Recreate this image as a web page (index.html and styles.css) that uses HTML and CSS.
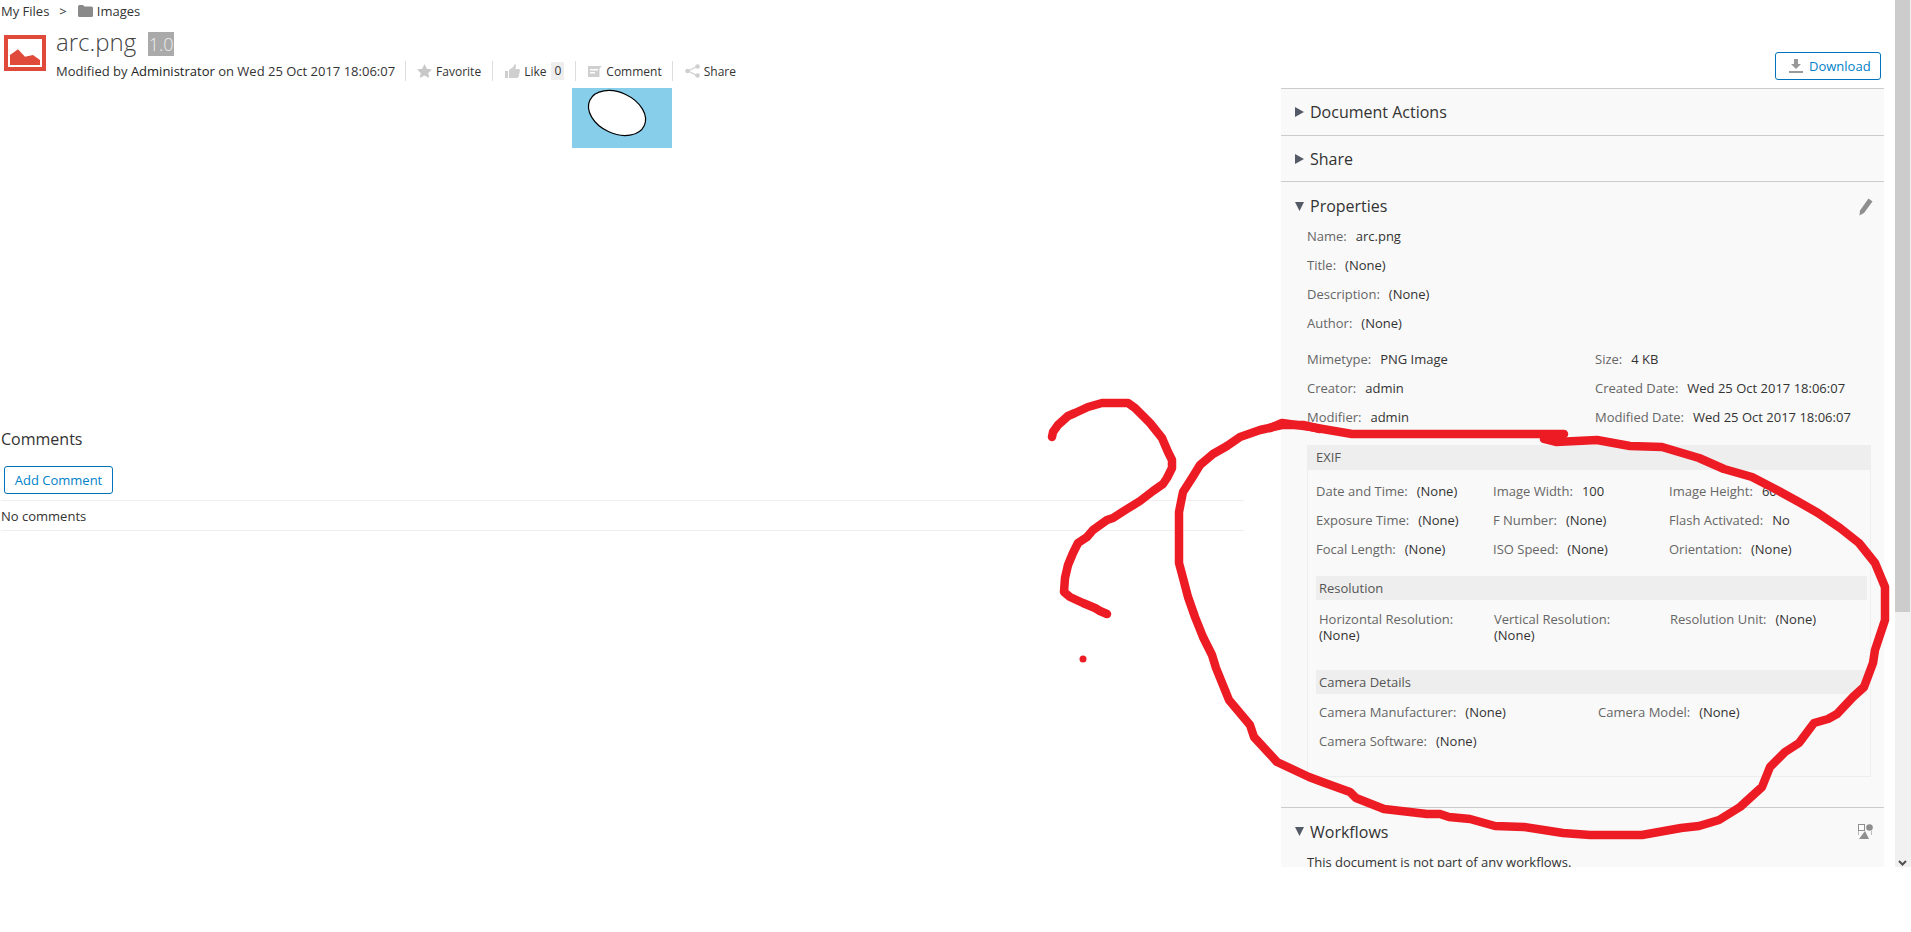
FILE: index.html
```html
<!DOCTYPE html>
<html lang="en">
<head>
<meta charset="utf-8">
<title>arc.png</title>
<link rel="stylesheet" href="styles.css">
</head>
<body>
<div class="app">
  <div class="content">
    <nav class="crumbs">
      <span>My Files</span><span class="crumb-sep">&gt;</span>
      <svg class="folder" width="15" height="12" viewBox="0 0 15 12"><path d="M0 1.5Q0 0 1.5 0H5L6.500 1.500H13.500Q15 1.500 15 3V10.500Q15 12 13.500 12H1.500Q0 12 0 10.500Z" fill="#8a8a8a"/></svg>
      <span>Images</span>
    </nav>
    <header class="header">
      <div class="header-left">
        <svg class="file-icon" width="42" height="36" viewBox="0 0 42 36"><rect x="2" y="2" width="38" height="32" fill="#fff" stroke="#e04a3a" stroke-width="4"/><path d="M6 20L14 14.300L21 21.700L29 20L36 25V30H6Z" fill="#e04a3a"/></svg>
        <div class="header-text">
          <div class="title-row"><h1 class="title">arc.png</h1><span class="version">1.0</span></div>
          <div class="meta">
            <span class="meta-text">Modified by <b class="name">Administrator</b> on Wed 25 Oct 2017 18:06:07</span>
            <span class="action first">
              <svg width="15" height="14" viewBox="0 0 15 14"><path d="M7.500 0L9.800 4.800L15 5.400L11.200 9L12.200 14L7.500 11.500L2.800 14L3.800 9L0 5.400L5.200 4.800Z" fill="#c8c8c8"/></svg>
              Favorite</span>
            <span class="action">
              <svg width="15" height="14" viewBox="0 0 15 14"><path d="M0 7H3V14H0ZM4 6L8 3L10 0Q11 0 11 2L10.500 5H14Q15 5 15 6.500L13.500 13Q13 14 12 14H4Z" fill="#cfcfcf"/></svg>
              Like <span class="count">0</span></span>
            <span class="action">
              <svg width="14" height="11" viewBox="0 0 14 11"><path d="M0 0H14L11.500 2.500V11H0ZM2 3V4.500H10V3ZM2 6V7.500H7V6Z" fill="#cfcfcf" fill-rule="evenodd"/></svg>
              Comment</span>
            <span class="action last">
              <svg width="15" height="14" viewBox="0 0 15 14"><path d="M12 2.500L3 7L12 11.500" fill="none" stroke="#cfcfcf" stroke-width="1.200"/><circle cx="12.500" cy="2.500" r="2.300" fill="#cfcfcf"/><circle cx="2.500" cy="7" r="2.300" fill="#cfcfcf"/><circle cx="12.500" cy="11.500" r="2.300" fill="#cfcfcf"/></svg>
              Share</span>
          </div>
        </div>
      </div>
      <button class="btn btn-download">
        <svg width="14" height="14" viewBox="0 0 14 14"><path d="M5 0H9V5H12L7 10L2 5H5ZM0 12H14V14H0Z" fill="#999"/></svg>
        Download</button>
    </header>
    <div class="body">
      <main class="main">
        <div class="preview">
          <svg width="100" height="60" viewBox="0 0 100 60"><rect width="100" height="60" fill="#87ceeb"/><ellipse cx="45" cy="25" rx="30" ry="20.500" transform="rotate(25 45 25)" fill="#fff" stroke="#000" stroke-width="1.200"/></svg>
        </div>
        <section class="comments">
          <h2 class="comments-title">Comments</h2>
          <button class="btn btn-add">Add Comment</button>
          <div class="no-comments">No comments</div>
        </section>
      </main>
      <aside class="sidebar">
        <section class="section">
          <h3 class="heading"><svg class="tri" width="9" height="10" viewBox="0 0 9 10"><path d="M0 0L9 5L0 10Z"/></svg>Document Actions</h3>
        </section>
        <section class="section tight">
          <h3 class="heading"><svg class="tri" width="9" height="10" viewBox="0 0 9 10"><path d="M0 0L9 5L0 10Z"/></svg>Share</h3>
        </section>
        <section class="section open props">
          <h3 class="heading"><svg class="tri" width="9" height="9" viewBox="0 0 9 9"><path d="M0 0H9L4.500 9Z"/></svg>Properties
            <svg class="head-icon" width="14" height="18" viewBox="0 0 14 18"><path d="M9.500 0.500L13.500 3.500L5 15L0.500 17.500L1 12.500Z" fill="#8f8f8f"/></svg></h3>
          <div class="indent">
            <div class="row"><span class="lbl">Name:</span><span class="val">arc.png</span></div>
            <div class="row"><span class="lbl">Title:</span><span class="val">(None)</span></div>
            <div class="row"><span class="lbl">Description:</span><span class="val">(None)</span></div>
            <div class="row"><span class="lbl">Author:</span><span class="val">(None)</span></div>
            <div class="grid-two">
              <div class="row"><span class="lbl">Mimetype:</span><span class="val">PNG Image</span></div>
              <div class="row"><span class="lbl">Size:</span><span class="val">4 KB</span></div>
              <div class="row"><span class="lbl">Creator:</span><span class="val">admin</span></div>
              <div class="row"><span class="lbl">Created Date:</span><span class="val">Wed 25 Oct 2017 18:06:07</span></div>
              <div class="row"><span class="lbl">Modifier:</span><span class="val">admin</span></div>
              <div class="row"><span class="lbl">Modified Date:</span><span class="val">Wed 25 Oct 2017 18:06:07</span></div>
            </div>
            <div class="exif">
              <div class="bar bar-main">EXIF</div>
              <div class="exif-body">
                <div class="grid-three">
                  <div class="row"><span class="lbl">Date and Time:</span><span class="val">(None)</span></div>
                  <div class="row"><span class="lbl">Image Width:</span><span class="val">100</span></div>
                  <div class="row"><span class="lbl">Image Height:</span><span class="val">60</span></div>
                  <div class="row"><span class="lbl">Exposure Time:</span><span class="val">(None)</span></div>
                  <div class="row"><span class="lbl">F Number:</span><span class="val">(None)</span></div>
                  <div class="row"><span class="lbl">Flash Activated:</span><span class="val">No</span></div>
                  <div class="row"><span class="lbl">Focal Length:</span><span class="val">(None)</span></div>
                  <div class="row"><span class="lbl">ISO Speed:</span><span class="val">(None)</span></div>
                  <div class="row"><span class="lbl">Orientation:</span><span class="val">(None)</span></div>
                </div>
                <div class="bar bar-sub bar-res">Resolution</div>
                <div class="grid-res">
                  <div class="wrap"><span class="lbl">Horizontal Resolution:</span><br><span class="val first-val">(None)</span></div>
                  <div class="wrap"><span class="lbl">Vertical Resolution:</span><br><span class="val first-val">(None)</span></div>
                  <div class="wrap"><span class="lbl">Resolution Unit:</span><span class="val">(None)</span></div>
                </div>
                <div class="bar bar-sub bar-cam">Camera Details</div>
                <div class="grid-cam">
                  <div class="row"><span class="lbl">Camera Manufacturer:</span><span class="val">(None)</span></div>
                  <div class="row"><span class="lbl">Camera Model:</span><span class="val">(None)</span></div>
                  <div class="row"><span class="lbl">Camera Software:</span><span class="val">(None)</span></div>
                </div>
              </div>
            </div>
          </div>
        </section>
        <section class="section open">
          <h3 class="heading"><svg class="tri" width="9" height="9" viewBox="0 0 9 9"><path d="M0 0H9L4.500 9Z"/></svg>Workflows
            <svg class="head-icon" width="15" height="15" viewBox="0 0 15 15"><rect x="0.500" y="0.500" width="6" height="6" fill="#fff" stroke="#8f8f8f"/><circle cx="11.500" cy="3.500" r="3.300" fill="#8f8f8f"/><path d="M7 7L11 15H1Z" fill="#8f8f8f"/><path d="M0.500 7V11M13.500 7V11" stroke="#bbb"/></svg></h3>
          <div class="indent"><div class="row val-only">This document is not part of any workflows.</div></div>
        </section>
      </aside>
    </div>
  </div>
  <div class="scrollbar">
    <div class="thumb"></div>
    <svg class="scroll-down" width="9" height="6" viewBox="0 0 9 6"><path d="M1 1L4.500 4.500L8 1" fill="none" stroke="#505050" stroke-width="2"/></svg>
  </div>
</div>
<svg class="scribble" width="1911" height="932" viewBox="0 0 1911 932" aria-hidden="true">
  <g class="ink">
    <polyline points="1052,437 1053,432 1058,425 1068,416 1075,413 1088,407 1102,403 1128,403 1135,408 1150,423 1162,438 1168,452 1172,460 1172,468 1167,478 1163,484 1153,491 1140,501 1127,509 1113,518 1107,520 1093,530 1087,537 1078,543 1073,553 1068,565 1065,578 1064,592 1070,597 1083,603 1095,608 1100,611 1107,614"/>
    <polyline points="1270,428 1282,423 1311,427 1352,434 1564,434"/>
    <polyline points="1320,429 1303,425 1282,425 1260,430 1240,437 1227,446 1213,454 1200,465 1192,478 1183,492 1179,512 1179,563 1183,578 1188,597 1195,617 1203,637 1212,655 1216,668 1229,700 1250,725 1254,737 1277,762 1309,777 1325,783 1350,792 1356,798 1384,809 1427,814 1440,814 1449,817 1470,819 1495,826 1524,827 1563,833 1590,835 1642,835 1681,828 1699,826 1719,820 1740,807 1762,787 1770,767 1785,752 1799,743 1814,723 1828,719 1837,714 1853,697 1864,687 1873,663 1875,650 1885,620 1885,587 1875,563 1859,543 1840,528 1818,513 1797,501 1777,490 1752,477 1724,469 1699,458 1662,447 1630,446 1597,440 1556,442 1544,439"/>
  </g>
  <circle class="ink-dot" cx="1083" cy="659" r="3.500"/>
</svg>
</body>
</html>
```

FILE: styles.css
```css
* { box-sizing: border-box; }
html, body { margin: 0; padding: 0; background: #fff; overflow: hidden; }
body {
  height: 932px;
  font-family: "Open Sans", "Liberation Sans", sans-serif;
  font-size: 13px;
  color: #333;
}
.app { display: flex; height: 867px; overflow: hidden; }
.content { width: 1895px; flex: none; }
.crumbs { display: flex; align-items: center; height: 22px; padding-left: 1px; }
.crumb-sep { margin: 0 11px 0 10px; }
.folder { margin-right: 4px; }

.header { display: flex; justify-content: space-between; align-items: flex-start; height: 66px; }
.header-left { display: flex; }
.file-icon { margin: 13px 10px 0 4px; }
.title-row { display: flex; align-items: flex-start; height: 38px; padding-top: 5px; }
.title { margin: 0; font-size: 24px; font-weight: 300; line-height: 30px; color: #444; }
.version {
  width: 26px; height: 24px; margin: 5px 0 0 12px;
  background: #aaa; color: #eee;
  font-size: 18px; font-weight: 300; line-height: 24px; text-align: center;
}
.meta { display: flex; align-items: center; height: 22px; }
.name { font-weight: 400; color: #222; }
.action {
  display: flex; align-items: center; gap: 4px;
  height: 20px; padding-left: 12px; margin-left: 11px;
  border-left: 1px solid #ddd;
  font-size: 12px;
}
.action.first { margin-left: 10px; padding-left: 11px; }
.action.last { margin-left: 10px; }
.count { background: #eee; padding: 0 3px; margin-left: 1px; line-height: 18px; }

.btn {
  font-family: inherit; font-size: 13px; color: #0082c8;
  background: #fff; border: 1px solid #0073ba; border-radius: 3px;
  padding: 0; cursor: pointer;
}
.btn-download {
  display: flex; align-items: center; gap: 6px;
  width: 106px; height: 28px; margin: 30px 14px 0 0; padding-left: 13px;
}
.body { display: flex; }
.main { width: 1244px; flex: none; }
.preview { display: flex; justify-content: center; height: 60px; }
.preview svg { display: block; }
.comments { padding-top: 279px; }
.comments-title { margin: 0 0 0 1px; font-size: 16px; font-weight: 400; line-height: 24px; color: #333; }
.btn-add { display: block; width: 109px; height: 28px; margin: 15px 0 6px 4px; }
.no-comments {
  height: 31px; margin-left: 1px; line-height: 31px;
  border-top: 1px solid #eee; border-bottom: 1px solid #eee;
}

.sidebar { width: 603px; height: 779px; margin-left: 37px; overflow: hidden; background: #f9f9f9; flex: none; }
.section { border-top: 1px solid #ccc; }
.heading {
  position: relative;
  display: flex; align-items: center;
  height: 46px; margin: 0; padding: 0 0 0 14px;
  font-size: 16px; font-weight: 400; color: #333;
}
.tight .heading { height: 45px; }
.tri { fill: #555b66; margin-right: 6px; }
.open .heading { height: 40px; padding: 8px 0 0 14px; }
.head-icon { position: absolute; right: 11px; top: 16px; }
.props { padding-bottom: 30px; }
.indent { padding-left: 26px; }
.row { height: 29px; line-height: 29px; white-space: nowrap; }
.lbl { color: #666; }
.val { margin-left: 9px; color: #333; }
.first-val { margin-left: 0; }
.grid-two { display: grid; grid-template-columns: 288px 1fr; margin-top: 7px; }
.exif { width: 564px; margin-top: 13px; border: 1px solid #eee; border-top: 0; }
.bar { height: 24px; line-height: 24px; background: #eee; color: #555; }
.bar-main { height: 25px; line-height: 25px; margin: 0 0 0 -1px; width: 564px; padding-left: 9px; }
.exif-body { padding: 6.500px 0 20px 8px; }
.grid-three { display: grid; grid-template-columns: 177px 176px 1fr; }
.bar-sub { padding-left: 3px; margin-right: 3px; }
.bar-res { margin-top: 12px; }
.grid-res { display: grid; grid-template-columns: 175px 176px 1fr; padding: 11px 0 0 3px; height: 70px; }
.wrap { line-height: 16px; }
.grid-cam { display: grid; grid-template-columns: 279px 1fr; padding: 4px 0 0 3px; }
.scrollbar { position: relative; width: 16px; height: 867px; background: #f1f1f1; flex: none; }
.thumb { width: 15px; height: 612px; background: #ccc; }
.scroll-down { position: absolute; left: 3px; bottom: 1px; }

.scribble { position: absolute; left: 0; top: 0; pointer-events: none; }
.ink { fill: none; stroke: #ed1c24; stroke-width: 8.500; stroke-linecap: round; stroke-linejoin: round; }
.ink-dot { fill: #ed1c24; }
```
